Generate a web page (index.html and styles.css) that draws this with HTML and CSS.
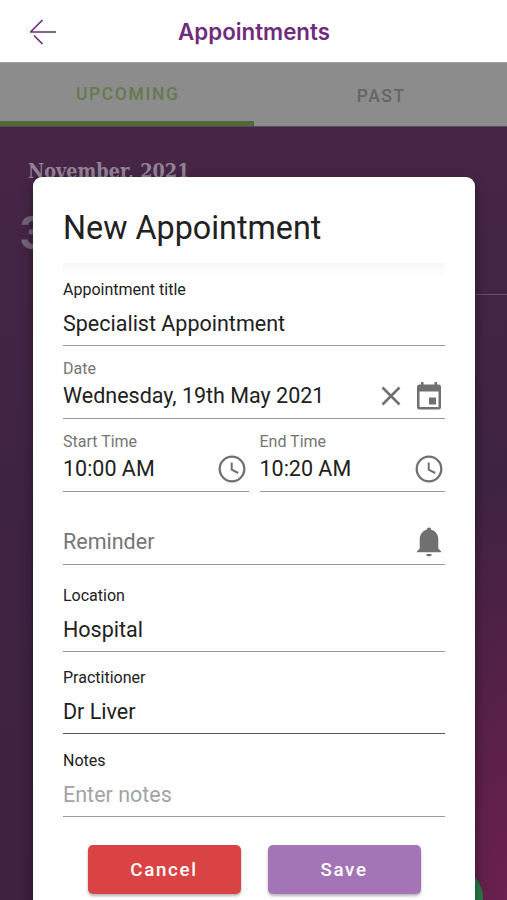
FILE: index.html
```html
<!DOCTYPE html>
<html lang="en">
<head>
	<meta charset="UTF-8">
	<meta name="viewport" content="width=device-width, initial-scale=1.0">
	<title>Appointments</title>
	<link rel="stylesheet" href="styles.css">
</head>
<body>
	<header class="header">
		<svg class="header__back" width="28" height="26" viewBox="0 0 28 26" fill="none" stroke="#6f2c7d" stroke-width="1.7">
			<path d="M27 13H1M13.500 1L1.500 13M5 16.500L13.500 25"/>
		</svg>
		<h1 class="header__title">Appointments</h1>
	</header>

	<nav class="tabs">
		<a class="tabs__item tabs__item--active">UPCOMING</a>
		<a class="tabs__item">PAST</a>
	</nav>

	<main class="page">
		<h2 class="page__month">November, 2021</h2>
		<div class="page__day">3</div>
		<div class="page__line"></div>
		<div class="page__add"></div>

		<form class="modal">
			<h2 class="modal__title">New Appointment</h2>

			<div class="field field--title">
				<label class="field__label">Appointment title</label>
				<div class="field__value">Specialist Appointment</div>
			</div>

			<div class="field field--picker">
				<label class="field__label">Date</label>
				<div class="field__value">
					Wednesday, 19th May 2021
					<span class="field__icons">
						<svg width="20" height="20" viewBox="0 0 20 20" fill="none" stroke="#707070" stroke-width="2.5">
							<path d="M1.500 1.500l17 17M18.500 1.500l-17 17"/>
						</svg>
						<svg width="26" height="28" viewBox="0 0 26 28">
							<path fill="#707070" fill-rule="evenodd" d="M5 0h2.500v2.500h11V0H21v2.500h1.500A2.500 2.500 0 0 1 25 5v20a2.500 2.500 0 0 1-2.500 2.500h-19A2.500 2.500 0 0 1 1 25V5a2.500 2.500 0 0 1 2.500-2.500H5zM3.500 9.500V25h19V9.500zM13 15.500h7v7h-7z"/>
						</svg>
					</span>
				</div>
			</div>

			<div class="row">
				<div class="field field--picker">
					<label class="field__label">Start Time</label>
					<div class="field__value">
						10:00 AM
						<svg width="28" height="28" viewBox="0 0 28 28" fill="none" stroke="#707070">
							<circle cx="14" cy="14" r="12.300" stroke-width="2.300"/>
							<path stroke-width="2" d="M13.700 7.500v7.200l6.500 3.300"/>
						</svg>
					</div>
				</div>
				<div class="field field--picker">
					<label class="field__label">End Time</label>
					<div class="field__value">
						10:20 AM
						<svg width="28" height="28" viewBox="0 0 28 28" fill="none" stroke="#707070">
							<circle cx="14" cy="14" r="12.300" stroke-width="2.300"/>
							<path stroke-width="2" d="M13.700 7.500v7.200l6.500 3.300"/>
						</svg>
					</div>
				</div>
			</div>

			<div class="field field--picker">
				<div class="field__value field__value--empty">
					Reminder
					<svg class="field__bell" width="26" height="30" viewBox="0 0 26 30" fill="#707070">
						<path d="M13 .5a2.300 2.300 0 0 1 2.300 2.200C19.500 4 22.300 7.500 22.300 12v9.500l2.700 2.800v1H1v-1l2.700-2.800V12C3.700 7.500 6.500 4 10.700 2.700A2.300 2.300 0 0 1 13 .5zM10.300 27h5.400a2.700 2.300 0 0 1-5.400 0z"/>
					</svg>
				</div>
			</div>

			<div class="field field--location">
				<label class="field__label">Location</label>
				<div class="field__value">Hospital</div>
			</div>

			<div class="field field--active">
				<label class="field__label">Practitioner</label>
				<div class="field__value">Dr Liver</div>
			</div>

			<div class="field">
				<label class="field__label">Notes</label>
				<div class="field__value field__value--placeholder">Enter notes</div>
			</div>

			<div class="buttons">
				<button class="button button--cancel" type="button">Cancel</button>
				<button class="button button--save" type="button">Save</button>
			</div>
		</form>
	</main>
</body>
</html>
```
FILE: styles.css
```css
* {
	box-sizing: border-box;
}
body {
	display: flex;
	flex-direction: column;
	height: 900px;
	margin: 0;
	overflow: hidden;
	font-family: Roboto, sans-serif;
	color: #212121;
}
h1, h2 {
	margin: 0;
}
svg {
	display: block;
	flex: none;
}
.header {
	display: grid;
	grid-template-columns: 29px 28px 1fr 56px;
	align-items: center;
	height: 62px;
	background: #fff;
}
.header__back {
	grid-column: 2;
	margin-top: 2px;
}
.header__title {
	padding-top: 2px;
	font-family: Inter, sans-serif;
	font-size: 22.300px;
	font-weight: 600;
	line-height: 30px;
	text-align: center;
	color: #6f2c7d;
}
.tabs {
	display: flex;
	height: 65px;
	background: #8c8c8c;
	border-top: 1px solid #a3a3a3;
	border-bottom: 1px solid #5e4663;
}
.tabs__item {
	display: flex;
	flex: 0 0 50%;
	align-items: center;
	justify-content: center;
	padding-top: 3px;
	padding-left: 2px;
	font-size: 17.500px;
	font-weight: 500;
	letter-spacing: 1.600px;
	color: #656565;
}
.tabs__item--active {
	color: #66794f;
	border-bottom: 5px solid #4d6a37;
}
.page {
	position: relative;
	flex: 1;
	padding: 30px 0 0 28px;
	background:
		radial-gradient(ellipse 130px 420px at 100% 100%, #6c2050, rgba(108, 32, 80, 0)),
		linear-gradient(#472547, #3f2342 45%, #40203f);
}
.page__month {
	font-family: "DejaVu Serif Condensed", "DejaVu Serif", serif;
	font-size: 19.700px;
	line-height: 29px;
	color: #918394;
}
.page__day {
	position: absolute;
	top: 79px;
	left: 20px;
	font-size: 46px;
	font-weight: 700;
	line-height: 54px;
	color: #75647a;
}
.page__line {
	position: absolute;
	top: 167px;
	right: 0;
	width: 60px;
	height: 1px;
	background: #654f67;
}
.page__add {
	position: absolute;
	top: 740px;
	right: 24px;
	width: 62px;
	height: 62px;
	border-radius: 50%;
	background: #267b43;
}
.modal {
	position: absolute;
	top: 50px;
	left: 33px;
	width: 442px;
	height: 740px;
	padding: 0 30px;
	background: #fff;
	border-radius: 9px 9px 0 0;
	box-shadow: 0 4px 12px rgba(0, 0, 0, .4);
}
.modal__title {
	height: 86px;
	padding-top: 31px;
	font-size: 32.300px;
	font-weight: 400;
	line-height: 40px;
	white-space: nowrap;
}
.row {
	display: flex;
	gap: 11px;
}
.row .field {
	flex: 1;
}
.field {
	display: flex;
	flex-direction: column;
	justify-content: flex-end;
	height: 83px;
	padding-bottom: 8px;
	border-bottom: 1px solid #9a9a9a;
}
.field--title {
	background: linear-gradient(#f8f8f8, #fff 14px);
}
.field--picker {
	height: 73px;
	padding-bottom: 9px;
}
.field--location {
	height: 87px;
}
.field--active {
	height: 82px;
	border-color: #555;
}
.field__label {
	margin-bottom: 10px;
	font-size: 16px;
	line-height: 18px;
}
.field--picker .field__label {
	margin-bottom: 3px;
	color: #757575;
}
.field__value {
	display: flex;
	align-items: center;
	justify-content: space-between;
	height: 28px;
	font-size: 21.500px;
	white-space: nowrap;
}
.field__value svg {
	margin-top: 2px;
}
.field__value--empty {
	color: #757575;
}
.field__value--placeholder {
	color: #a3a3a3;
}
.field__icons {
	display: flex;
	align-items: center;
	gap: 15px;
}
.field__icons,
.field__bell {
	margin-right: 3px;
}
.row svg {
	margin-right: 3px;
}
.row .field:last-child svg {
	margin-right: 2px;
}
.buttons {
	display: flex;
	justify-content: center;
	gap: 27px;
	padding-top: 28px;
}
.button {
	width: 153px;
	height: 49px;
	padding: 0;
	border: none;
	border-radius: 5px;
	font-family: inherit;
	font-size: 18.700px;
	font-weight: 500;
	letter-spacing: 1.700px;
	color: #fff;
	box-shadow: 0 2px 3px rgba(0, 0, 0, .3);
}
.button--cancel {
	background: #d94343;
}
.button--save {
	background: #a475b6;
}
```
